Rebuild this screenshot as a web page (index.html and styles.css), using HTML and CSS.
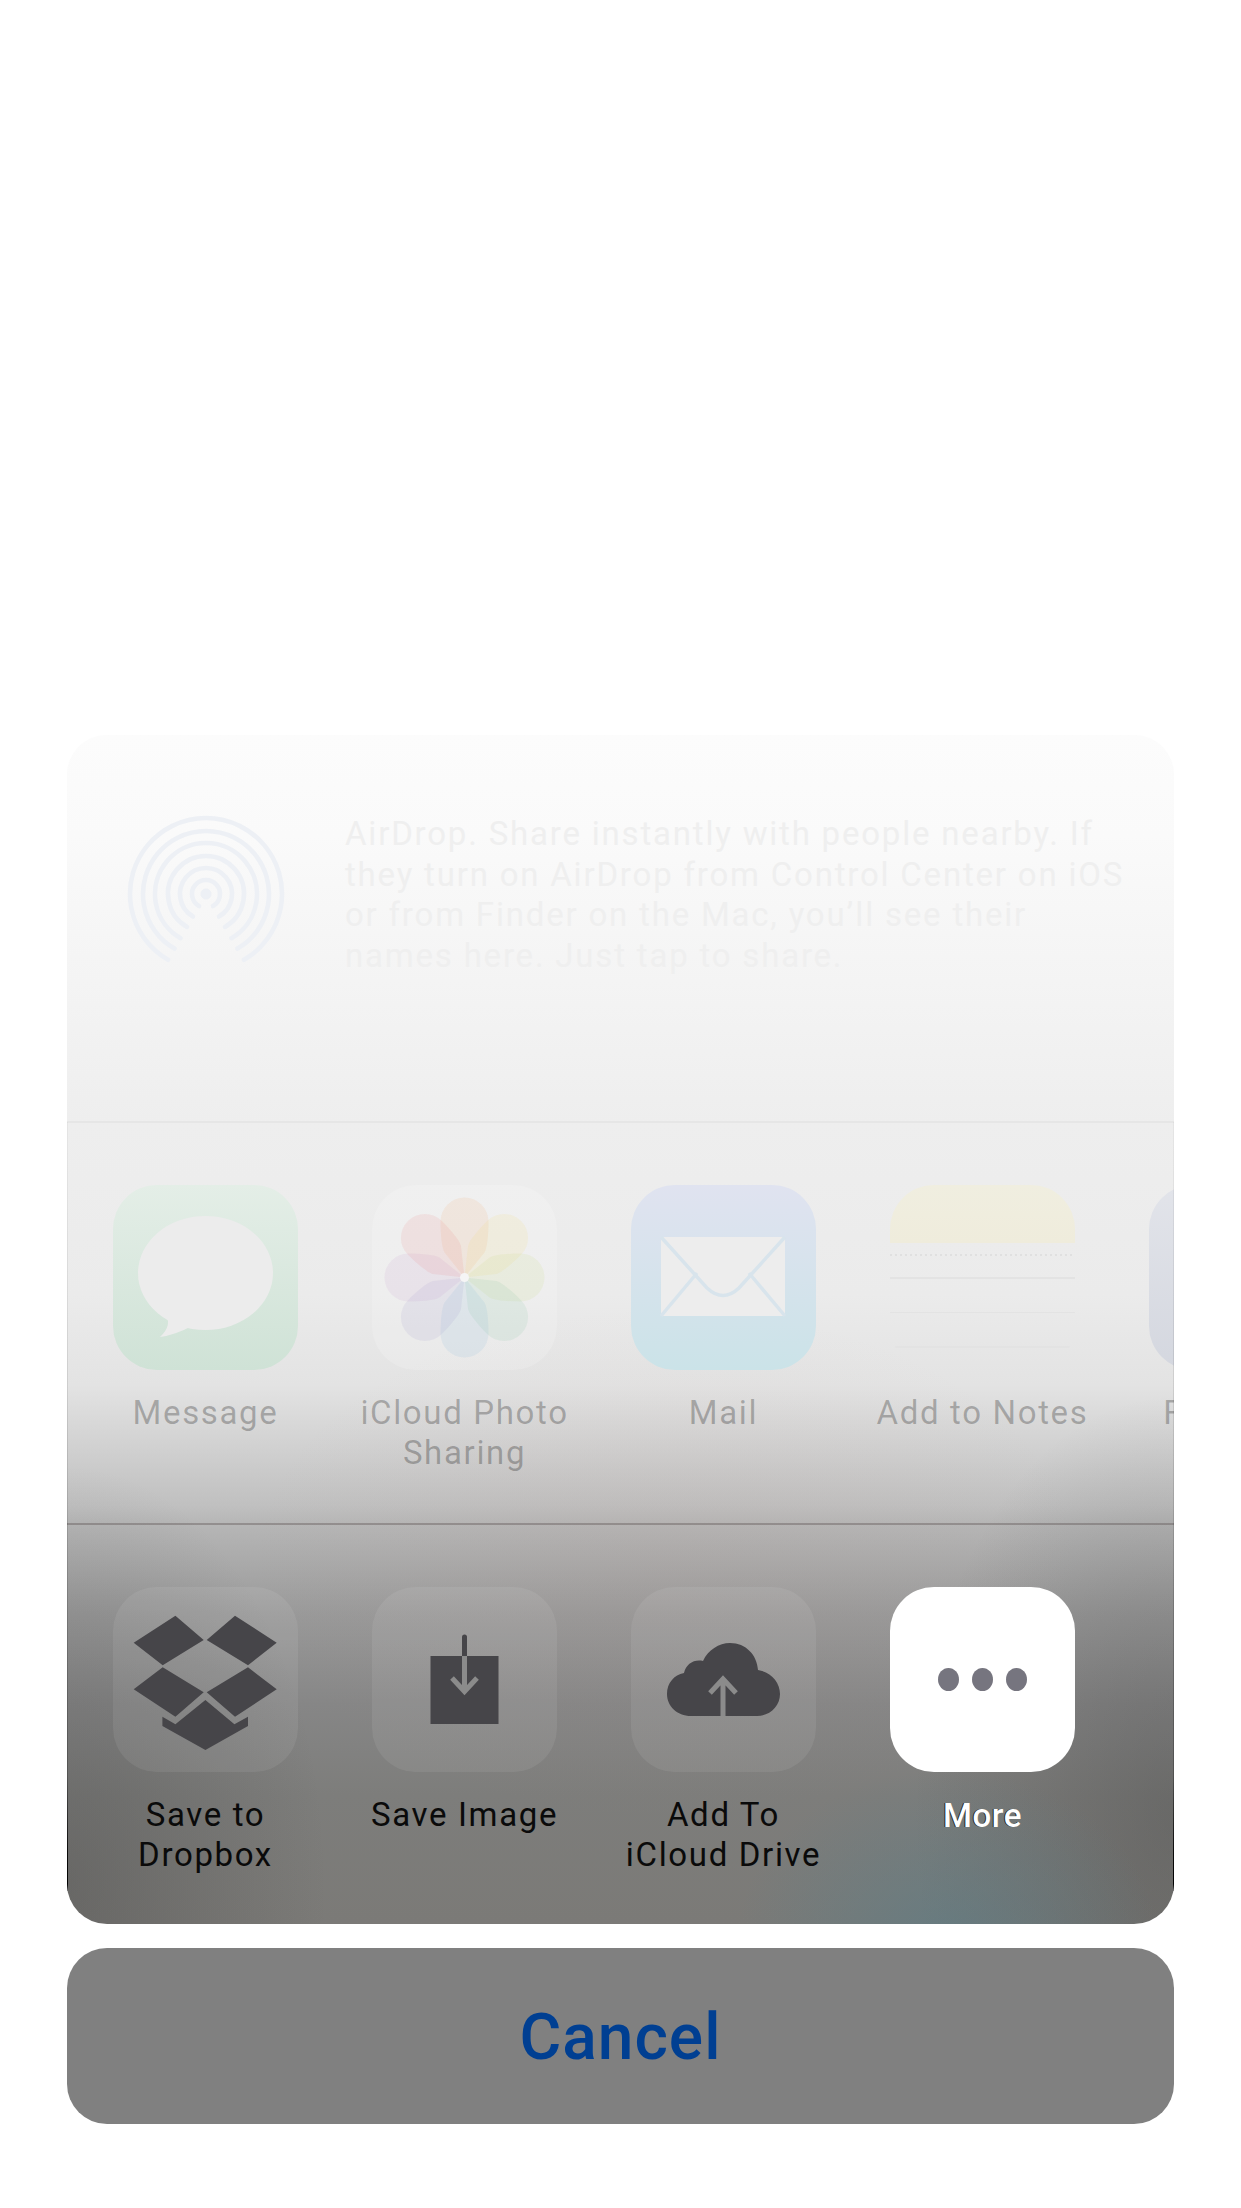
FILE: index.html
```html
<!DOCTYPE html>
<html lang="en">
<head>
<meta charset="utf-8">
<title>Share sheet</title>
<link rel="stylesheet" href="styles.css">
</head>
<body>
<main class="page">
  <section class="sheet">
    <div class="airdrop">
      <svg class="airdrop-icon" viewBox="-80 -80 160 160" aria-hidden="true">
        <g fill="none" stroke-width="4.6" stroke-linecap="round">
          <path d="M-38 65.8A76 76 0 1 1 38 65.8"/>
          <path d="M-31.5 54.6A63 63 0 1 1 31.5 54.6"/>
          <path d="M-25.5 44.2A51 51 0 1 1 25.5 44.2"/>
          <path d="M-19 32.9A38 38 0 1 1 19 32.9"/>
          <path d="M-13 22.5A26 26 0 1 1 13 22.5"/>
          <path d="M-7 12.1A14 14 0 1 1 7 12.1"/>
        </g>
        <circle r="5"/>
      </svg>
      <p class="airdrop-text">AirDrop. Share instantly with people nearby. If they turn on AirDrop from Control Center on iOS or from Finder on the Mac, you’ll see their names here. Just tap to share.</p>
    </div>

    <div class="row row-apps">
      <div class="item">
        <div class="tile tile-message">
          <svg class="glyph" viewBox="0 0 185 185" aria-hidden="true">
            <ellipse cx="92.5" cy="88" rx="67.5" ry="57"/>
            <path d="M52 128Q60 140 47 152Q62 150 79 141Z"/>
          </svg>
        </div>
        <div class="label">Message</div>
      </div>
      <div class="item">
        <div class="tile tile-photos">
          <svg class="glyph" viewBox="0 0 185 185" aria-hidden="true">
            <defs>
              <path id="petal" d="M0 0L-20-25C-23-30-24-45-24-56A24 24 0 0 1 24-56C24-45 23-30 20-25Z"/>
            </defs>
            <g transform="translate(92.5 92.5)">
              <use class="petal p1" href="#petal"/>
              <use class="petal p2" href="#petal" transform="rotate(45)"/>
              <use class="petal p3" href="#petal" transform="rotate(90)"/>
              <use class="petal p4" href="#petal" transform="rotate(135)"/>
              <use class="petal p5" href="#petal" transform="rotate(180)"/>
              <use class="petal p6" href="#petal" transform="rotate(225)"/>
              <use class="petal p7" href="#petal" transform="rotate(270)"/>
              <use class="petal p8" href="#petal" transform="rotate(315)"/>
              <circle class="petal-core" r="4.5"/>
            </g>
          </svg>
        </div>
        <div class="label">iCloud Photo<br>Sharing</div>
      </div>
      <div class="item">
        <div class="tile tile-mail">
          <svg class="glyph" viewBox="0 0 185 185" aria-hidden="true">
            <rect x="30" y="52" width="124" height="79"/>
            <path class="mail-line" d="M30 52L76 103Q92 118 108 103L154 52M30 131L66 88M154 131L118 88"/>
          </svg>
        </div>
        <div class="label">Mail</div>
      </div>
      <div class="item">
        <div class="tile tile-notes">
          <div class="notes-head"></div>
          <div class="notes-dots"></div>
          <div class="notes-line notes-line-first"></div>
          <div class="notes-line"></div>
          <div class="notes-line notes-line-short"></div>
        </div>
        <div class="label">Add to Notes</div>
      </div>
      <div class="item">
        <div class="tile tile-fifth"></div>
        <div class="label">Facebook</div>
      </div>
    </div>

    <div class="row row-actions">
      <div class="item">
        <div class="tile tile-action">
          <svg class="glyph" viewBox="0 0 185 185" aria-hidden="true">
            <path class="ink" d="M62.4 28.7L90.7 53L49.7 78.3L20.7 55.7ZM122 28.7L163.7 55.7L135 78.3L93.7 53ZM49.7 80.3L90.7 105.3L62.4 129.7L20.7 102.3ZM135 80.3L163.7 102.3L122 129.7L93.7 105.3ZM92.4 113L121.4 137.3L135 129.7V139L92.4 163L49.4 139V129.7L62.4 137.3Z"/>
          </svg>
        </div>
        <div class="label">Save to<br>Dropbox</div>
      </div>
      <div class="item">
        <div class="tile tile-action">
          <svg class="glyph" viewBox="0 0 185 185" aria-hidden="true">
            <rect class="ink" x="58.5" y="69" width="68" height="68"/>
            <path class="ink-stroke" d="M92.5 50V69"/>
            <path class="cut-stroke" d="M92.5 69V104M80 91L92.5 104.5L105 91"/>
          </svg>
        </div>
        <div class="label">Save Image</div>
      </div>
      <div class="item">
        <div class="tile tile-action">
          <svg class="glyph" viewBox="0 0 185 185" aria-hidden="true">
            <path class="ink" d="M60 129C46 129 36 119 36 107C36 96 43 88 53 86C55 77 63 72 72 74C77 63 88 56 99 56C115 56 126 68 127 83C140 85 149 95 149 107C149 119 139 129 126 129Z"/>
            <path class="cut-stroke" d="M92 129V92M79 106L92 92L105 106"/>
          </svg>
        </div>
        <div class="label">Add To<br>iCloud Drive</div>
      </div>
      <div class="item">
        <div class="tile tile-more">
          <span class="dot"></span><span class="dot"></span><span class="dot"></span>
        </div>
        <div class="label label-more">More</div>
      </div>
    </div>
  </section>

  <button class="cancel" type="button">Cancel</button>
</main>
</body>
</html>
```

FILE: styles.css
```css
* {
  box-sizing: border-box;
}

html,
body {
  margin: 0;
  padding: 0;
  background: #fff;
}

.page {
  width: 1241px;
  height: 2208px;
  padding: 735px 67px 0 67px;
  font-family: Roboto, "Liberation Sans", sans-serif;
}

.sheet {
  position: relative;
  height: 1189px;
  border-radius: 40px;
  overflow: hidden;
  background:
    radial-gradient(ellipse 210px 170px at 880px 1205px, rgba(90, 125, 135, 0.6), rgba(90, 125, 135, 0) 100%),
    radial-gradient(ellipse 420px 260px at 600px 830px, rgba(170, 140, 130, 0.09), rgba(170, 140, 130, 0) 100%),
    radial-gradient(ellipse 260px 420px at 0 1150px, rgba(60, 60, 60, 0.3), rgba(60, 60, 60, 0) 100%),
    radial-gradient(ellipse 260px 420px at 1106px 1080px, rgba(60, 60, 60, 0.3), rgba(60, 60, 60, 0) 100%),
    linear-gradient(to bottom,
      #fcfcfc 0,
      #fafafa 100px,
      #f3f3f3 270px,
      #eeeeee 387px,
      #ebebeb 560px,
      #e3e3e3 650px,
      #d0d0d0 715px,
      #c0c0c0 770px,
      #b6b6b6 789px,
      #a9a9a9 830px,
      #999999 880px,
      #868686 970px,
      #7d7d7b 1060px,
      #7b7a77 1189px);
}

.sheet::before,
.sheet::after {
  content: "";
  position: absolute;
  top: 387px;
  bottom: 33px;
  width: 1px;
  background: linear-gradient(to bottom, rgba(0, 0, 0, 0.04), rgba(0, 0, 0, 0.12) 50%, rgba(0, 0, 0, 0.25) 85%, rgba(0, 0, 0, 0.9) 95%, #000);
}

.sheet::before {
  left: 0;
}

.sheet::after {
  right: 0;
}

.airdrop {
  display: flex;
  height: 388px;
  padding: 79px 0 0 61px;
  border-bottom: 2px solid #e6e6e6;
}

.airdrop-icon {
  flex: none;
  width: 160px;
  height: 160px;
  margin: 0 0 0 -2px;
  stroke: #edf0f5;
  fill: #edf0f5;
}

.airdrop-text {
  width: 785px;
  margin: 0 0 0 59px;
  font-size: 33px;
  line-height: 40.5px;
  letter-spacing: 1.8px;
  color: #efefef;
}

.row {
  display: flex;
  gap: 74px;
  padding: 62px 0 0 46px;
}

.row-apps {
  height: 402px;
  border-bottom: 2px solid rgba(90, 80, 80, 0.38);
}

.row-actions {
  height: 399px;
}

.item {
  flex: none;
  width: 185px;
  display: flex;
  flex-direction: column;
  align-items: center;
}

.tile {
  flex: none;
  width: 185px;
  height: 185px;
  border-radius: 44px;
}

.glyph {
  display: block;
  width: 185px;
  height: 185px;
}

.label {
  flex: none;
  width: 259px;
  margin-top: 23px;
  font-size: 33px;
  line-height: 40px;
  letter-spacing: 1.65px;
  text-align: center;
  white-space: nowrap;
  color: #0a0a0a;
}

.row-apps .label {
  color: rgba(0, 0, 0, 0.26);
}

/* faded app tiles */
.tile-message {
  background: linear-gradient(to bottom, #e4eee7, #cfe2d6);
}

.tile-message .glyph {
  fill: #ececec;
}

.tile-photos {
  background: rgba(255, 255, 255, 0.16);
}

.petal {
  opacity: 0.09;
}

.p1 { fill: #f08a30; }
.p2 { fill: #f3d23a; }
.p3 { fill: #b5cf3d; }
.p4 { fill: #4fb27a; }
.p5 { fill: #4a9bd0; }
.p6 { fill: #7c6bc2; }
.p7 { fill: #b06fb8; }
.p8 { fill: #e8504e; }

.petal-core {
  fill: #f5f5f5;
}

.tile-mail {
  background: linear-gradient(to bottom, #e0e3f0, #cbe3e8);
}

.tile-mail .glyph {
  fill: #ededed;
}

.mail-line {
  fill: none;
  stroke: #d8e4ec;
  stroke-width: 3.5;
}

.tile-notes {
  overflow: hidden;
}

.notes-head {
  height: 58px;
  background: linear-gradient(to bottom, #f0eee0, #efecdc);
}

.notes-dots {
  height: 2px;
  margin-top: 11px;
  background: repeating-linear-gradient(to right, #e0e0e0 0 2px, rgba(0, 0, 0, 0) 2px 5px);
}

.notes-line {
  height: 1.5px;
  margin-top: 33px;
  background: #e3e3e3;
}

.notes-line-first {
  margin-top: 21px;
}

.notes-line-short {
  margin: 33px 4px 0;
}

.tile-fifth {
  background: linear-gradient(to bottom, #e2e4ea, #d4d7df);
}

/* action tiles */
.tile-action {
  background: rgba(255, 255, 255, 0.075);
}

.ink {
  fill: #464549;
}

.ink-stroke {
  fill: none;
  stroke: #464549;
  stroke-width: 5;
  stroke-linecap: round;
}

.cut-stroke {
  fill: none;
  stroke: #8b8b8b;
  stroke-width: 5;
}

.tile-more {
  display: flex;
  align-items: center;
  justify-content: center;
  gap: 13px;
  background: #fff;
}

.dot {
  width: 21px;
  height: 23px;
  border-radius: 50%;
  background: #76757f;
}

.label-more {
  margin-top: 24px;
  color: #fff;
  font-weight: 500;
  letter-spacing: 0.6px;
  text-shadow: -1px 0 0 rgba(0, 0, 0, 0.75);
}

.cancel {
  display: block;
  width: 100%;
  height: 176px;
  margin: 24px 0 0;
  padding: 2px 0 0;
  border: 0;
  border-radius: 40px;
  background: #808080;
  color: #003f92;
  font-family: Roboto, "Liberation Sans", sans-serif;
  font-size: 64px;
  font-weight: 500;
  letter-spacing: 1px;
}
```
